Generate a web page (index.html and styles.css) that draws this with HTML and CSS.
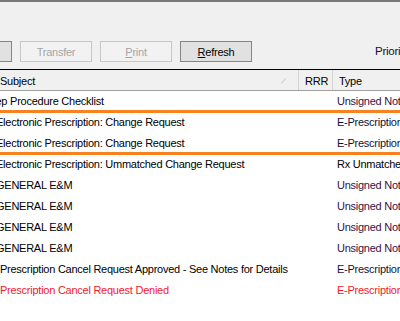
FILE: index.html
```html
<!DOCTYPE html>
<html lang="en">
  <head>
    <meta charset="UTF-8" />
    <title>Inbox</title>
    <link rel="stylesheet" href="styles.css">
  </head>
  <body>
    <div class="toolbar">
      <button class="btn">Open</button>
      <button class="btn" disabled>Transfer</button>
      <button class="btn" disabled><u>P</u>rint</button>
      <button class="btn"><u>R</u>efresh</button>
      <span class="label">Priority</span>
    </div>

    <div class="list">
      <div class="head">
        <div class="hcol sep">Subject
          <svg class="sort" width="5" height="6" viewBox="0 0 5 6"><path d="M0.5 5.5 L4.5 0.5" stroke="#c4c4c4" stroke-width="1" fill="none"/></svg>
        </div>
        <div class="hcol sep">RRR</div>
        <div class="hcol">Type</div>
      </div>

      <div class="row">
        <div class="subj cut">Prep Procedure Checklist</div><div></div>
        <div class="type unsigned">Unsigned Note</div>
      </div>
      <div class="group">
        <div class="row">
          <div class="subj">Electronic Prescription: Change Request</div><div></div>
          <div class="type erx">E-Prescription</div>
        </div>
        <div class="row">
          <div class="subj">Electronic Prescription: Change Request</div><div></div>
          <div class="type erx">E-Prescription</div>
        </div>
      </div>
      <div class="row">
        <div class="subj">Electronic Prescription: Ummatched Change Request</div><div></div>
        <div class="type">Rx Unmatched</div>
      </div>
      <div class="row">
        <div class="subj">GENERAL E&amp;M</div><div></div>
        <div class="type unsigned">Unsigned Note</div>
      </div>
      <div class="row">
        <div class="subj">GENERAL E&amp;M</div><div></div>
        <div class="type unsigned">Unsigned Note</div>
      </div>
      <div class="row">
        <div class="subj">GENERAL E&amp;M</div><div></div>
        <div class="type unsigned">Unsigned Note</div>
      </div>
      <div class="row">
        <div class="subj">GENERAL E&amp;M</div><div></div>
        <div class="type unsigned">Unsigned Note</div>
      </div>
      <div class="row">
        <div class="subj shift">Prescription Cancel Request Approved - See Notes for Details</div><div></div>
        <div class="type erx">E-Prescription</div>
      </div>
      <div class="row denied">
        <div class="subj shift">Prescription Cancel Request Denied</div><div></div>
        <div class="type">E-Prescription</div>
      </div>
      <div class="row"><div></div><div></div><div></div></div>
    </div>
  </body>
</html>
```

FILE: styles.css
```css
body {
  margin: 0;
  background-color: #f0f0f0;
  border-top: 2px solid #7a7a7a;
  font-family: "Liberation Sans", Arial, sans-serif;
  font-size: 11px;
  letter-spacing: -0.25px;
  color: #000;
  overflow: hidden;
  height: 319px;
}

.toolbar {
  display: flex;
  align-items: flex-start;
  gap: 8px;
  height: 67px;
  padding-top: 39px;
  box-sizing: border-box;
  margin-left: -60px;
  white-space: nowrap;
}

.btn {
  flex: none;
  width: 72px;
  height: 21px;
  padding: 0;
  font: inherit;
  letter-spacing: inherit;
  color: #000;
  background-color: #e1e1e1;
  border: 1px solid #858585;
  border-radius: 0;
}

.btn:disabled {
  color: #a6a6a6;
  background-color: #f2f2f2;
  border-color: #c6c6c6;
}

.label {
  margin-left: 115px;
  line-height: 21px;
  color: #10103a;
  font-size: 11.5px;
}

.list {
  border-top: 1px solid #000;
  background-color: #fff;
  height: 260px;
}

.head,
.row {
  display: grid;
  grid-template-columns: 305px 34px 1fr;
  margin-left: -6px;
  white-space: nowrap;
}

.head {
  height: 20px;
  background-color: #f0f0f0;
  border-bottom: 1px solid #a0a0a0;
}

.hcol {
  position: relative;
  padding: 5px 0 0 6px;
  box-sizing: border-box;
}

.sep {
  border-right: 1px solid #d4d4d4;
}

.sort {
  position: absolute;
  right: 12px;
  top: 8px;
}

.row {
  height: 21px;
  line-height: 21px;
}

.row > div {
  overflow: hidden;
}

.subj {
  padding-left: 2px;
}

.subj.cut {
  text-indent: -11px;
}

.subj.shift {
  padding-left: 6px;
}

.type {
  padding-left: 4px;
}

.unsigned {
  color: #361048;
}

.erx {
  color: #121238;
}

.denied {
  color: #f01a2c;
}

.group {
  position: relative;
}

.group::before,
.group::after {
  content: "";
  position: absolute;
  left: 0;
  right: 0;
  height: 3px;
  background-color: #f7821f;
}

.group::before {
  top: -2px;
}

.group::after {
  bottom: -1px;
}
```
